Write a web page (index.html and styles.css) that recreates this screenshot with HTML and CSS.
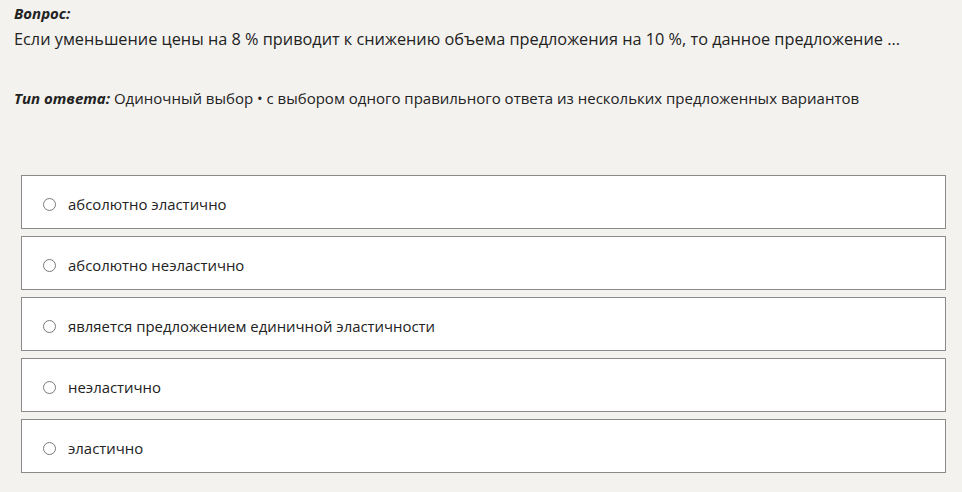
FILE: index.html
```html
<!DOCTYPE html>
<html lang="ru">
<head>
<meta charset="utf-8">
<link rel="stylesheet" href="styles.css">
</head>
<body>
<div class="page">
  <div class="label">Вопрос:</div>
  <div class="question">Если уменьшение цены на 8 % приводит к снижению объема предложения на 10 %, то данное предложение ...</div>
  <div class="type"><span class="label">Тип ответа:</span> Одиночный выбор • с выбором одного правильного ответа из нескольких предложенных вариантов</div>
  <div class="options">
    <label class="option"><span class="radio"></span><span>абсолютно эластично</span></label>
    <label class="option"><span class="radio"></span><span>абсолютно неэластично</span></label>
    <label class="option"><span class="radio"></span><span>является предложением единичной эластичности</span></label>
    <label class="option"><span class="radio"></span><span>неэластично</span></label>
    <label class="option"><span class="radio"></span><span>эластично</span></label>
  </div>
</div>
</body>
</html>
```
FILE: styles.css
```css
html, body {
  margin: 0;
  padding: 0;
  background: #f3f2ef;
}
body {
  font-family: "Open Sans", "Noto Sans", sans-serif;
  color: #222;
}
.page {
  padding: 3px 16px 0 14px;
}
.label {
  font-weight: bold;
  font-style: italic;
  font-size: 15px;
  line-height: 20px;
}
.question {
  font-size: 16.3px;
  line-height: 22px;
  margin-top: 5px;
}
.type {
  font-size: 15px;
  line-height: 20px;
  margin-top: 38px;
}
.type .label {
  display: inline;
}
.options {
  margin: 67px 0 0 7px;
  display: flex;
  flex-direction: column;
  gap: 7px;
}
.option {
  display: flex;
  align-items: center;
  background: #fff;
  border: 1px solid #8a8a8a;
  padding-left: 21px;
  font-size: 14.9px;
  padding-top: 3px;
  box-sizing: content-box;
  height: 49px;
}
.radio {
  width: 11px;
  height: 11px;
  border: 1px solid #7a7a7a;
  border-radius: 50%;
  margin-right: 12px;
  margin-top: 2px;
  flex: none;
}
```
